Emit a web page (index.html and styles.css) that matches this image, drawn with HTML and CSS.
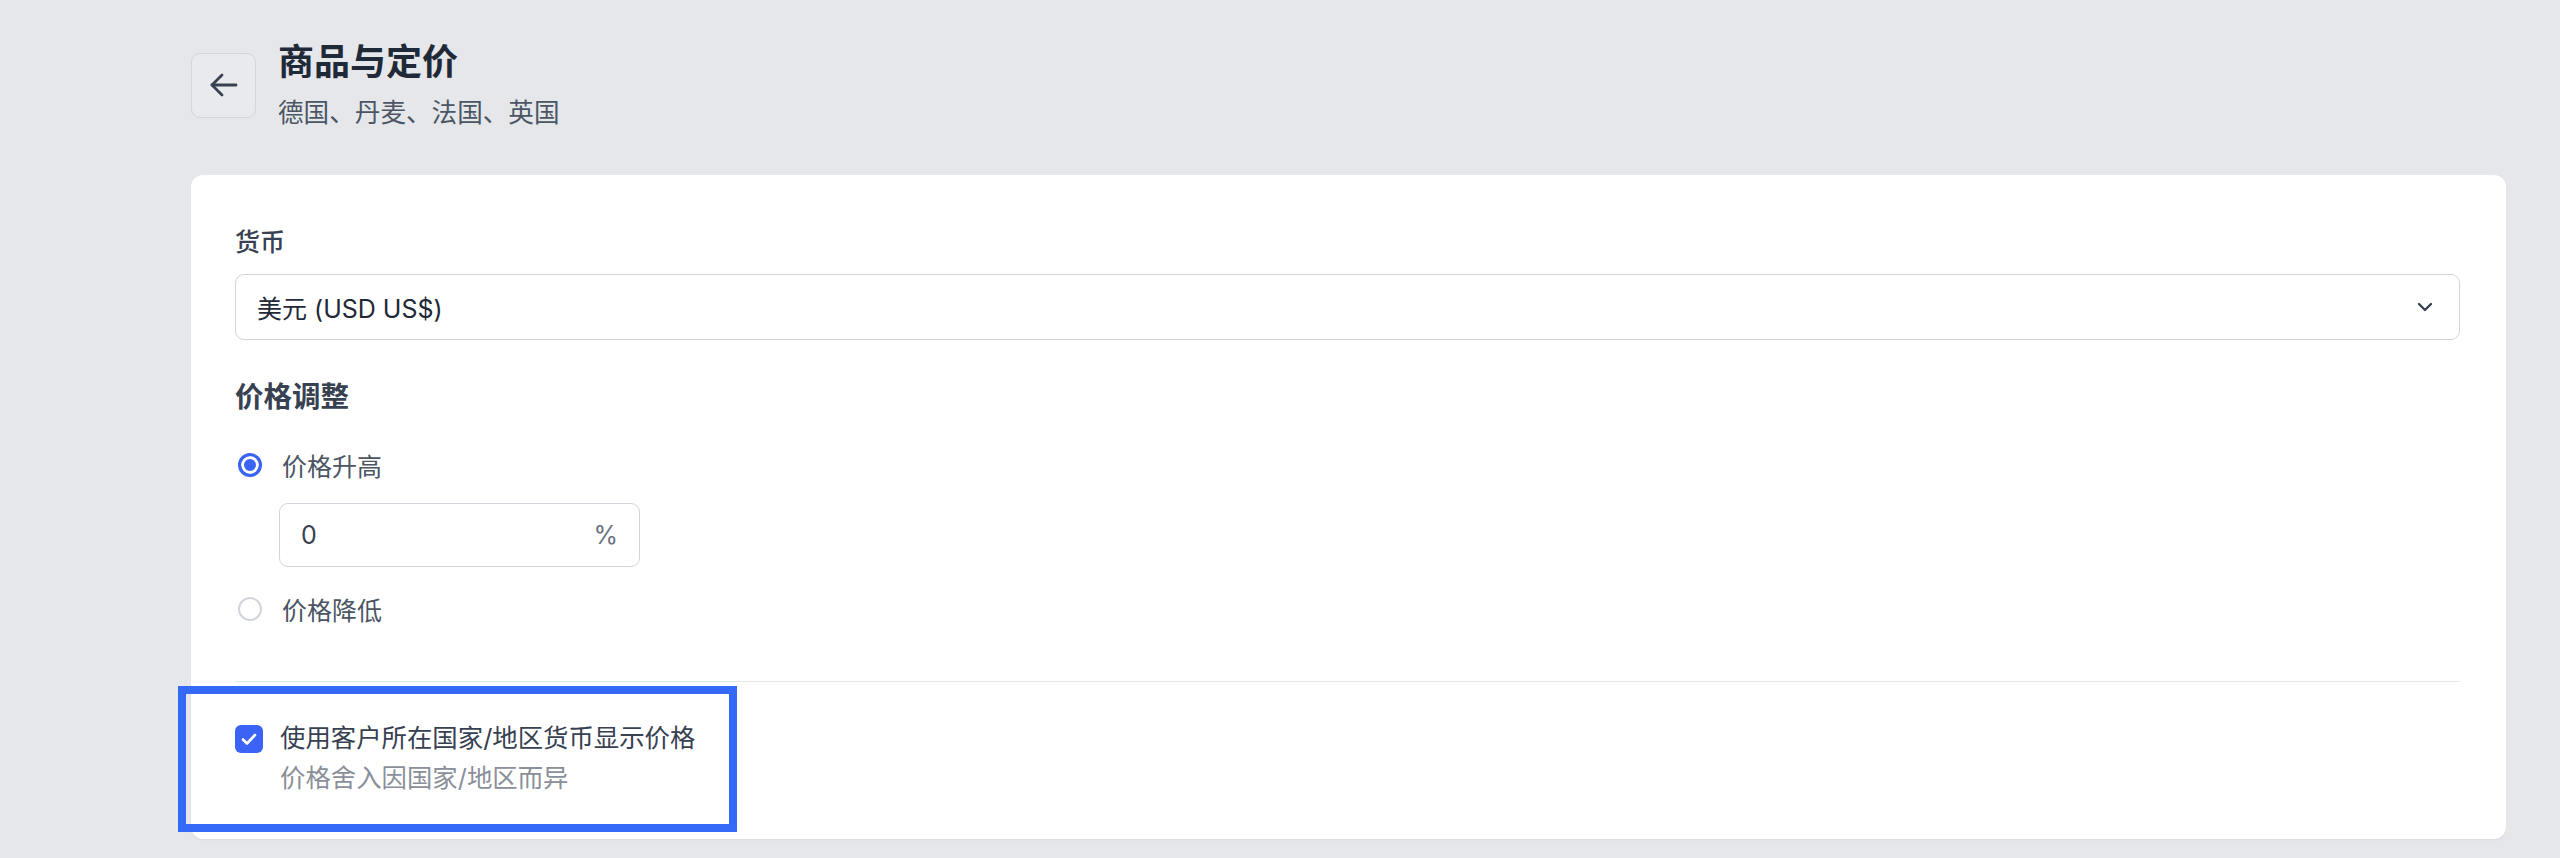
FILE: index.html
```html
<!DOCTYPE html>
<html lang="zh-CN">
<head>
<meta charset="utf-8">
<title>商品与定价</title>
<link rel="stylesheet" href="styles.css">
</head>
<body>
<div class="page">
  <header class="header">
    <button class="back-btn" aria-label="返回">
      <svg width="30" height="26" viewBox="0 0 30 26" fill="none" stroke="#374151" stroke-width="2.8" stroke-linecap="round" stroke-linejoin="round"><path d="M27 13H3"/><path d="M13 3L3 13l10 10"/></svg>
    </button>
    <div class="header-text">
      <h1 class="title">商品与定价</h1>
      <div class="subtitle">德国、丹麦、法国、英国</div>
    </div>
  </header>

  <section class="card">
    <div class="field-label">货币</div>
    <div class="select">
      <span class="select-value">美元 (USD US$)</span>
      <svg class="chevron" width="16" height="10" viewBox="0 0 16 10" fill="none" stroke="#374151" stroke-width="2.4" stroke-linecap="round" stroke-linejoin="round"><path d="M2 2l6 6 6-6"/></svg>
    </div>

    <div class="section-title">价格调整</div>
    <div class="radio-row">
      <span class="radio radio-checked"></span>
      <span class="radio-label">价格升高</span>
    </div>
    <div class="percent-input">
      <span class="input-value">0</span>
      <span class="input-suffix">%</span>
    </div>
    <div class="radio-row radio-row-second">
      <span class="radio"></span>
      <span class="radio-label">价格降低</span>
    </div>

    <div class="divider"></div>

    <div class="check-row">
      <span class="checkbox">
        <svg width="16" height="12" viewBox="0 0 16 12" fill="none" stroke="#ffffff" stroke-width="2.6" stroke-linecap="round" stroke-linejoin="round"><path d="M2 6.5l4 4 8-8.5"/></svg>
      </span>
      <div class="check-text">
        <div class="check-label">使用客户所在国家/地区货币显示价格</div>
        <div class="check-help">价格舍入因国家/地区而异</div>
      </div>
      <div class="highlight"></div>
    </div>
  </section>
</div>
</body>
</html>
```

FILE: styles.css
```css
* { box-sizing: border-box; }

html, body {
  margin: 0;
  padding: 0;
}

body {
  background: #e5e7eb;
  font-family: "Inter", "Noto Sans CJK SC", sans-serif;
  color: #374151;
  width: 2560px;
  height: 858px;
  overflow: hidden;
}

.page {
  padding: 40px 54px 0 191px;
}

.header {
  display: flex;
  align-items: center;
  gap: 22px;
}

.back-btn {
  width: 65px;
  height: 65px;
  border: 1.5px solid #d3d6dc;
  border-radius: 9px;
  background: #e8eaee;
  display: flex;
  align-items: center;
  justify-content: center;
  padding: 0;
  flex: none;
}

.header-text {
  display: flex;
  flex-direction: column;
}

.title {
  margin: 0;
  font-size: 36px;
  line-height: 44px;
  font-weight: 700;
  color: #1f2937;
}

.subtitle {
  margin-top: 12px;
  font-size: 25.6px;
  line-height: 34px;
  color: #4b5563;
}

.card {
  margin-top: 45px;
  width: 2315px;
  height: 664px;
  background: #ffffff;
  border-radius: 12px;
  box-shadow: 0 1px 2px rgba(0, 0, 0, 0.06);
  padding: 50px 46px 0 44px;
}

.field-label {
  font-size: 25px;
  line-height: 34px;
  font-weight: 500;
  color: #374151;
}

.select {
  margin-top: 15px;
  height: 66px;
  border: 1.5px solid #d1d5db;
  border-radius: 9px;
  display: flex;
  align-items: center;
  justify-content: space-between;
  padding: 0 26px 0 21px;
}

.select-value {
  font-size: 25px;
  color: #1f2937;
}

.section-title {
  margin-top: 38px;
  font-size: 28.5px;
  line-height: 38px;
  font-weight: 600;
  color: #374151;
}

.radio-row {
  margin-top: 31px;
  display: flex;
  align-items: center;
  gap: 20px;
  height: 36px;
  padding-left: 3px;
}

.radio-row-second {
  margin-top: 24px;
}

.radio {
  width: 24px;
  height: 24px;
  border-radius: 50%;
  border: 2px solid #d1d5db;
  background: #ffffff;
  flex: none;
}

.radio-checked {
  border: 3px solid #3b63f5;
  box-shadow: inset 0 0 0 3px #ffffff;
  background: #3b63f5;
}

.radio-label {
  font-size: 25px;
  color: #4b5563;
}

.percent-input {
  margin-top: 20px;
  margin-left: 44px;
  width: 361px;
  height: 64px;
  border: 1.5px solid #d1d5db;
  border-radius: 9px;
  display: flex;
  align-items: center;
  justify-content: space-between;
  padding: 0 21px;
}

.input-value {
  font-size: 25px;
  color: #374151;
}

.input-suffix {
  font-size: 25px;
  color: #6b7280;
}

.divider {
  margin-top: 54px;
  height: 1px;
  background: #e5e7eb;
}

.check-row {
  position: relative;
  margin-top: 36px;
  display: flex;
  align-items: flex-start;
  gap: 17px;
}

.checkbox {
  margin-top: 7px;
  width: 28px;
  height: 28px;
  border-radius: 6px;
  background: #3b63f5;
  display: flex;
  align-items: center;
  justify-content: center;
  flex: none;
}

.check-text {
  display: flex;
  flex-direction: column;
}

.check-label {
  font-size: 25.4px;
  line-height: 40px;
  color: #374151;
}

.check-help {
  font-size: 25.4px;
  line-height: 40px;
  color: #8a8f99;
}

.highlight {
  position: absolute;
  left: -57px;
  top: -32px;
  width: 559px;
  height: 146px;
  border: 8px solid #3468f6;
  pointer-events: none;
}
```
